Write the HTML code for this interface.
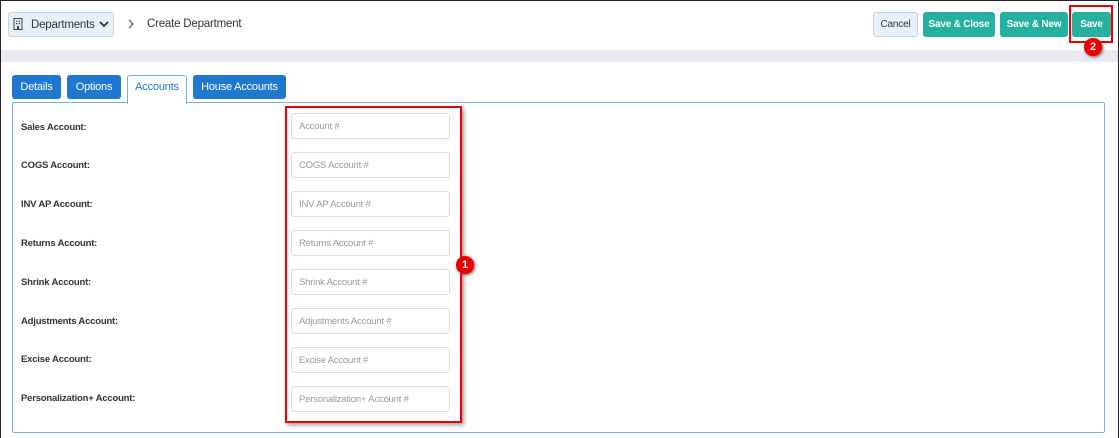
<!DOCTYPE html><html><head><style>
*{box-sizing:border-box;margin:0;padding:0}
body{width:1119px;height:438px;background:#fff;font-family:"Liberation Sans",sans-serif;position:relative;overflow:hidden}
.a{position:absolute}
.btn{position:absolute;top:12px;height:25px;border-radius:3px;font-size:10px;font-weight:bold;color:#fff;background:#26b09e;text-align:center;line-height:26px;letter-spacing:-0.2px}
.tab{position:absolute;top:75px;height:24px;border-radius:3px;background:#1f77cf;color:#fff;font-size:11px;text-align:center;line-height:24px;letter-spacing:-0.2px}
.lbl{position:absolute;left:21px;font-size:9.5px;font-weight:bold;color:#333;letter-spacing:-0.2px}
.inp{position:absolute;left:291px;width:159px;height:26px;border:1px solid #ddd;border-radius:3px;font-size:9.5px;color:#999;padding-left:7px;line-height:26px;letter-spacing:-0.2px}
.badge{position:absolute;width:18px;height:18px;border-radius:50%;background:#e00;color:#fff;font-size:11px;font-weight:bold;text-align:center;line-height:18px;box-shadow:1px 1px 3px #555}
</style></head><body>
<div class="a" style="left:0;top:50px;width:1119px;height:12px;background:#e9e9ef"></div>
<div class="a" style="left:8px;top:12px;width:106px;height:25px;background:#e8f0fa;border:1px solid #c8d2de;border-radius:3px;font-size:11.5px;color:#333;line-height:24px;padding-left:22px;letter-spacing:-0.2px">Departments</div>
<svg class="a" style="left:13px;top:18px" width="10" height="12" viewBox="0 0 10 12"><rect x="1" y="0.5" width="8" height="11" fill="none" stroke="#444"/><g fill="#444"><rect x="3" y="2.5" width="1.3" height="1.3"/><rect x="5.7" y="2.5" width="1.3" height="1.3"/><rect x="3" y="5" width="1.3" height="1.3"/><rect x="5.7" y="5" width="1.3" height="1.3"/><rect x="4" y="8" width="2" height="3.5"/></g></svg>
<svg class="a" style="left:99px;top:21px" width="10" height="7" viewBox="0 0 10 7"><path d="M1 1L5 5L9 1" fill="none" stroke="#333" stroke-width="1.8"/></svg>
<svg class="a" style="left:128px;top:19px" width="7" height="10" viewBox="0 0 7 10"><path d="M1 1L5 5L1 9" fill="none" stroke="#666" stroke-width="1.3"/></svg>
<div class="a" style="left:147px;top:18px;font-size:11.5px;color:#333;letter-spacing:-0.2px">Create Department</div>
<div class="btn" style="left:873px;width:45px;background:#e8f0fa;border:1px solid #c8d2de;color:#333;font-weight:normal;line-height:24px">Cancel</div>
<div class="btn" style="left:923px;width:72px">Save &amp; Close</div>
<div class="btn" style="left:1000px;width:68px">Save &amp; New</div>
<div class="btn" style="left:1072px;width:39px">Save</div>
<div class="a" style="left:1069px;top:5px;width:44px;height:38px;border:2px solid #e00"></div>
<div class="badge" style="left:1084px;top:38px">2</div>
<div class="a" style="left:12px;top:102px;width:1093px;height:331px;border:1px solid #7aaee6;border-radius:2px"></div>
<div class="tab" style="left:12px;width:49px">Details</div>
<div class="tab" style="left:67px;width:54px">Options</div>
<div class="a" style="left:127px;top:75px;width:60px;height:29px;background:#fff;border:1px solid #7aaee6;border-bottom:none;border-radius:3px 3px 0 0;color:#1f77cf;font-size:11px;text-align:center;line-height:22px;letter-spacing:-0.2px">Accounts</div>
<div class="tab" style="left:193px;width:93px">House Accounts</div>
<div class="lbl" style="top:122px">Sales Account:</div><div class="inp" style="top:113px">Account #</div>
<div class="lbl" style="top:160px">COGS Account:</div><div class="inp" style="top:152px">COGS Account #</div>
<div class="lbl" style="top:199px">INV AP Account:</div><div class="inp" style="top:191px">INV AP Account #</div>
<div class="lbl" style="top:238px">Returns Account:</div><div class="inp" style="top:230px">Returns Account #</div>
<div class="lbl" style="top:277px">Shrink Account:</div><div class="inp" style="top:269px">Shrink Account #</div>
<div class="lbl" style="top:316px">Adjustments Account:</div><div class="inp" style="top:308px">Adjustments Account #</div>
<div class="lbl" style="top:354px">Excise Account:</div><div class="inp" style="top:347px">Excise Account #</div>
<div class="lbl" style="top:393px">Personalization+ Account:</div><div class="inp" style="top:386px">Personalization+ Account #</div>
<div class="a" style="left:285px;top:106px;width:177px;height:317px;border:2px solid #e00;box-shadow:2px 2px 4px #999"></div>
<div class="badge" style="left:456px;top:256px">1</div>
<div class="a" style="left:0;top:0;width:1px;height:438px;background:#222"></div>
<div class="a" style="left:1118px;top:0;width:1px;height:438px;background:#222"></div>
<div class="a" style="left:0;top:0;width:1119px;height:1px;background:#222"></div>
</body></html>
